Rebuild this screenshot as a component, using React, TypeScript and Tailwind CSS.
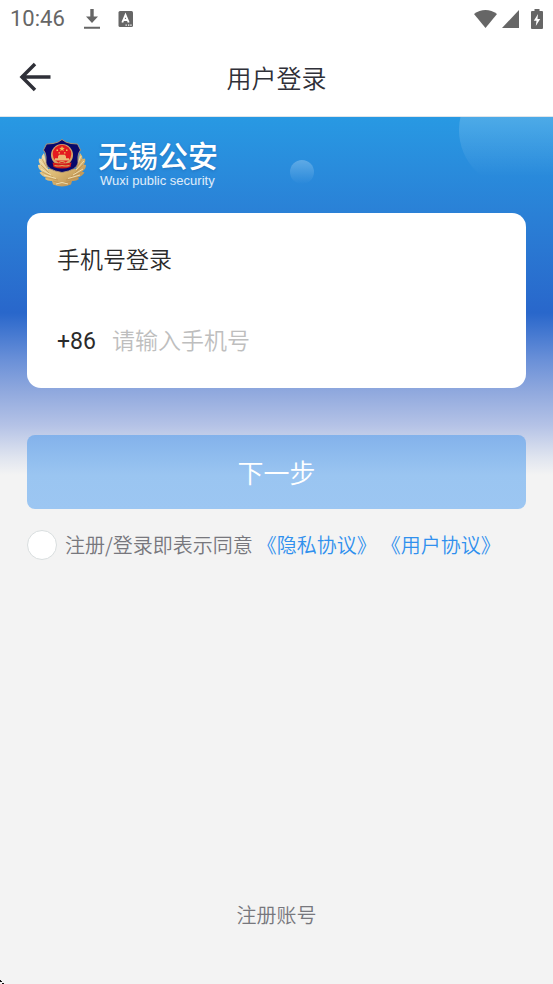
import { useId, useState } from 'react';

// Status bar: clock and notification icons left, radio and battery right
function StatusBar() {
  return (
    <div className="flex h-[38px] items-center justify-between px-[10px] text-[#666666]">
      <div className="flex items-center">
        <span className="font-[Roboto,sans-serif] text-[22px] font-normal leading-6">10:46</span>
        <svg className="ml-[19px] h-5 w-4" viewBox="0 0 16 20" fill="currentColor" aria-hidden="true">
          <path d="M6.300 0h3.400v7.500H14L8 14 2 7.500h4.300zM0 17.800h16v2H0z" />
        </svg>
        <svg className="ml-[18px] h-4 w-4" viewBox="0 0 16 16" aria-hidden="true">
          <rect x="0.500" width="14.500" height="16" rx="1.500" fill="currentColor" />
          <path d="M4.300 11.500 7.500 4l3.200 7.500M5.500 9h4" fill="none" stroke="#fff" strokeWidth="1.900" />
          <path d="M7.500 13.500h1.300v1.200H7.500zM10 13.500h1.300v1.200H10zM12.300 13.500h1.300v1.200h-1.300z" fill="#fff" />
        </svg>
      </div>
      <div className="flex items-center" aria-hidden="true">
        <svg className="h-[18px] w-[23px]" viewBox="0 0 23 18" fill="currentColor">
          <path d="M0 4C7-1.300 16-1.300 23 4L11.500 18z" />
        </svg>
        <svg className="ml-[5px] h-[18px] w-[17px]" viewBox="0 0 17 18" fill="currentColor">
          <path d="M17 0v18H0z" />
        </svg>
        <svg className="ml-3 h-5 w-3" viewBox="0 0 12 20">
          <path d="M3.500 0h5v2H11q1 0 1 1v16q0 1-1 1H1q-1 0-1-1V3q0-1 1-1h2.500z" fill="currentColor" />
          <path d="M7 5 2.800 11.800H5.500L4.800 17 9.200 10H6.500z" fill="#fff" />
        </svg>
      </div>
    </div>
  );
}

function PoliceBadge() {
  const id = useId();

  return (
    <svg className="h-12 w-12" viewBox="0 0 48 48" role="img" aria-label="警徽">
      <defs>
        <linearGradient id={id} x1="0" y1="0" x2="1" y2="1">
          <stop offset="0" stopColor="#efdcae" />
          <stop offset="0.500" stopColor="#dcb973" />
          <stop offset="1" stopColor="#b08143" />
        </linearGradient>
      </defs>
      {/* branches */}
      <path
        d="M6 14Q3 17 3.500 20L1 19.500Q0 23 2.500 25.500L0 26Q0 30 4 32.500L1.500 33.500Q4 37.500 8 38.500L7 40Q10 42.500 14 42L15 45.500Q20 47.500 24 47.500T33 45.500L34 42Q38 42.500 41 40L40 38.500Q44 37.500 46.500 33.500L44 32.500Q48 30 48 26L45.500 25.500Q48 23 47 19.500L44.500 20Q45 17 42 14L38 30H10z"
        fill={`url(#${id})`}
      />
      <path
        d="M4 20 9 29M3 26 11 34M4 33 15 38M8 38.500 20 41M44 20 39 29M45 26 37 34M44 33 33 38M40 38.500 28 41M15 42 22 44M33 42 26 44"
        fill="none"
        stroke="#b88b4a"
        strokeWidth="0.600"
      />
      <path
        d="M5 17 9 26M2 22 10 31M3 30 13 36M6 36 18 39.500M43 17 39 26M46 22 38 31M45 30 35 36M42 36 30 39.500M18 45Q24 42 30 45"
        fill="none"
        stroke="#f3e2b6"
        strokeWidth="0.900"
      />
      {/* shield */}
      <path
        d="M24 0.500Q28 4 33 4.500L39.500 5 42.500 11Q40 14 40 18V24Q39 31 24 33.500Q9 31 8 24V18Q8 14 5.500 11L8.500 5 15 4.500Q20 4 24 0.500z"
        fill="#08086b"
        stroke="#b79a72"
        strokeWidth="0.900"
      />
      {/* emblem */}
      <circle cx="24" cy="16" r="11" fill="#d6a367" />
      <circle cx="24" cy="15" r="9.300" fill="#e31a20" />
      <path d="M24 6.800 24.700 8.800 26.800 8.900 25.200 10.200 25.800 12.200 24 11 22.200 12.200 22.800 10.200 21.200 8.900 23.300 8.800z" fill="#f1bd56" />
      <path d="M18.500 10.500h1.500v1.500h-1.500zM28 10.500h1.500v1.500H28zM20.500 13.200H22v1.300h-1.500zM26 13.200h1.500v1.300H26z" fill="#f1bd56" />
      <path d="M20 17.500 21 15.800h6l1 1.700v1.700h3v2.300H17v-2.300h3z" fill="#ecb977" />
      <path d="M14.500 23.500q9.500 2 19 0l-1 4.500q-8.500 3-17 0z" fill="#d51d1a" />
      <path d="M16.500 26.500q4 1 7.500 0 3.500 1 7.500 0M21 23.500q3-2 6 0" fill="none" stroke="#d9a45e" strokeWidth="1.200" />
    </svg>
  );
}

export default function App() {
  const [phone, setPhone] = useState('');
  const [agreed, setAgreed] = useState(false);

  return (
    <div className="relative flex min-h-screen flex-col bg-[#f3f3f3] font-['Noto_Sans_CJK_SC',sans-serif] font-[350] text-[#2f3038]">
      <header className="bg-white">
        <StatusBar />
        <div className="grid h-[78px] grid-cols-[1fr_auto_1fr] items-center px-[19px]">
          <button type="button" aria-label="返回" className="w-8">
            <svg className="h-8 w-8" viewBox="0 0 32 32" fill="none" stroke="currentColor" strokeWidth="3.500" aria-hidden="true">
              <path d="M16 3 3 16l13 13M2 16h29.500" />
            </svg>
          </button>
          <h1 className="text-[25px] leading-9">用户登录</h1>
        </div>
      </header>

      <main className="relative flex flex-1 flex-col overflow-hidden border-t border-[#dfe5ea] bg-[linear-gradient(180deg,#2899e3_0px,#2a80d6_98px,#2967cb_196px,#6a90d8_243px,#8ca6dd_271px,#b4c2e6_308px,#dfe4ef_340px,#f3f3f3_358px)] px-[27px]">
        {/* decorative bubbles */}
        <div className="absolute right-[-22px] top-[-45px] h-[116px] w-[116px] rounded-full bg-[linear-gradient(180deg,rgba(255,255,255,0.2)_30%,transparent_90%)]" />
        <div className="absolute left-[290px] top-[43px] h-6 w-6 rounded-full bg-linear-to-b from-white/25 to-white/0" />

        <div className="flex h-24 items-center gap-3 pb-1 pl-[11px]">
          <PoliceBadge />
          <div className="text-white">
            <p className="text-[30px] font-medium leading-9 [text-shadow:0_1px_3px_rgba(20,70,140,0.4)]">无锡公安</p>
            <p className="pl-0.5 font-['Liberation_Sans',sans-serif] text-[13px] leading-[18px] text-white/85">Wuxi public security</p>
          </div>
        </div>

        <form className="relative flex flex-col" onSubmit={(e) => e.preventDefault()}>
          <section className="h-[175px] rounded-[14px] bg-white px-[30px] pt-[27px] text-[#2b2b2b]">
            <h2 className="text-[23px] leading-9">手机号登录</h2>
            <div className="mt-[45px] flex items-baseline gap-4 text-[23px] leading-9">
              <label htmlFor="phone" className="font-[Roboto,sans-serif] font-normal">+86</label>
              <input
                id="phone"
                type="tel"
                value={phone}
                onChange={(e) => setPhone(e.target.value)}
                placeholder="请输入手机号"
                className="h-9 min-w-0 flex-1 outline-none placeholder:text-[#bebebe]"
              />
            </div>
          </section>

          <button type="submit" className="mt-[47px] h-[74px] rounded-lg bg-[linear-gradient(180deg,#83b2eb_0px,#9ac5f1_40px,#9cc6f2_74px)] text-[26px] leading-9 text-white">
            下一步
          </button>

          <div className="mt-[21px] flex items-center gap-2 whitespace-nowrap text-xl text-[#77777d]">
            <input
              id="agree"
              type="checkbox"
              checked={agreed}
              onChange={(e) => setAgreed(e.target.checked)}
              className="h-[30px] w-[30px] shrink-0 appearance-none rounded-full border border-[#d9dedf] bg-white checked:bg-[#3090ee]"
            />
            <div className="flex gap-1 [text-spacing-trim:space-all]">
              <label htmlFor="agree">注册/登录即表示同意</label>
              <a href="#privacy" className="text-[#3090ee]">《隐私协议》</a>
              <a href="#terms" className="text-[#3090ee]">《用户协议》</a>
            </div>
          </div>
        </form>

        <a href="#register" className="mb-[53px] mt-auto self-center text-xl leading-8 text-[#77777d]">注册账号</a>
      </main>

      <svg className="absolute bottom-0 left-0 h-1 w-1" viewBox="0 0 4 4" aria-hidden="true">
        <path d="M0 0h1v1H0zM1 1h1v1H1zM2 3h2v1H2zM0 1h1v1H0z" fill="#111" />
      </svg>
    </div>
  );
}
